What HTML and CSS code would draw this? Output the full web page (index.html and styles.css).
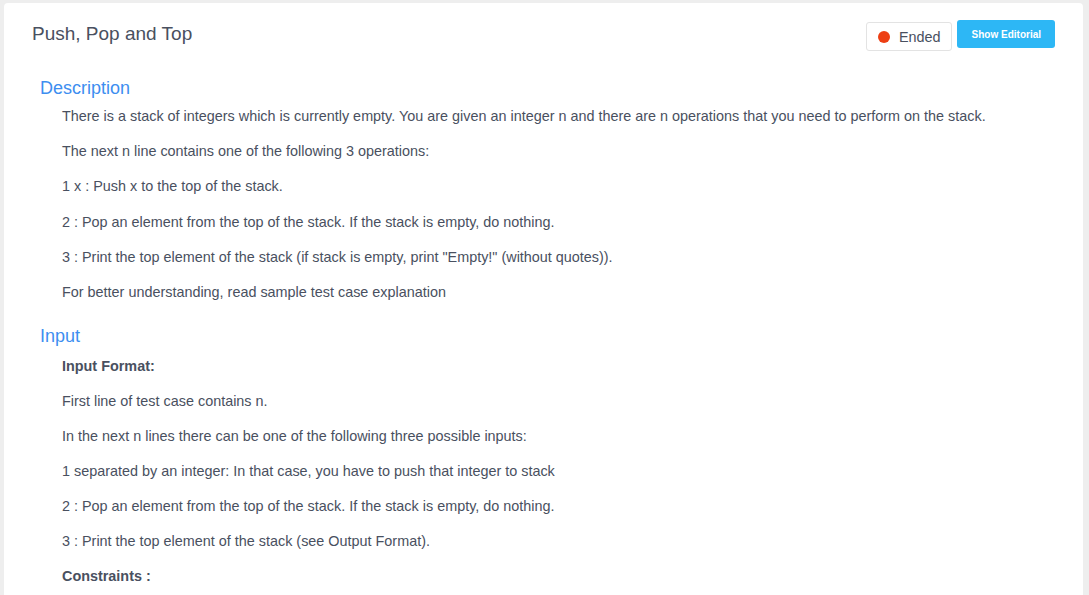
FILE: index.html
```html
<!DOCTYPE html>
<html>
<head>
<meta charset="utf-8">
<link rel="stylesheet" href="styles.css">
</head>
<body>
<div class="card">
  <div class="header">
    <h1 class="title">Push, Pop and Top</h1>
    <div class="actions">
      <div class="status"><span class="dot"></span>Ended</div>
      <button class="editorial">Show Editorial</button>
    </div>
  </div>
  <h2 class="section">Description</h2>
  <div class="body">
    <p>There is a stack of integers which is currently empty. You are given an integer n and there are n operations that you need to perform on the stack.</p>
    <p>The next n line contains one of the following 3 operations:</p>
    <p>1 x : Push x to the top of the stack.</p>
    <p>2 : Pop an element from the top of the stack. If the stack is empty, do nothing.</p>
    <p>3 : Print the top element of the stack (if stack is empty, print "Empty!" (without quotes)).</p>
    <p>For better understanding, read sample test case explanation</p>
  </div>
  <h2 class="section">Input</h2>
  <div class="body compact">
    <p class="strong">Input Format:</p>
    <p>First line of test case contains n.</p>
    <p>In the next n lines there can be one of the following three possible inputs:</p>
    <p>1 separated by an integer: In that case, you have to push that integer to stack</p>
    <p>2 : Pop an element from the top of the stack. If the stack is empty, do nothing.</p>
    <p>3 : Print the top element of the stack (see Output Format).</p>
    <p class="strong">Constraints :</p>
  </div>
</div>
</body>
</html>
```
FILE: styles.css
```css
html, body {
  margin: 0;
  padding: 0;
  background: #eeeeee;
  font-family: "Liberation Sans", Arial, sans-serif;
  overflow: hidden;
}
body {
  padding: 3px 6px 0 4px;
}
.card {
  background: #ffffff;
  border-radius: 4px;
  padding: 17px 28px 40px 28px;
  min-height: 700px;
}
.header {
  display: flex;
  justify-content: space-between;
  align-items: flex-start;
}
.title {
  margin: 1px 0 0 0;
  font-size: 19px;
  font-weight: normal;
  color: #495060;
  line-height: 26px;
}
.actions {
  display: flex;
  align-items: flex-start;
  gap: 5px;
}
.status {
  display: flex;
  align-items: center;
  box-sizing: border-box;
  height: 29px;
  margin-top: 2px;
  padding: 0 10px 0 11px;
  border: 1px solid #e3e3e3;
  border-radius: 3px;
  font-size: 14.4px;
  color: #495060;
}
.dot {
  width: 12px;
  height: 12px;
  border-radius: 50%;
  background: #ed3f14;
  margin-right: 9px;
}
.editorial {
  height: 28px;
  padding: 0 14px 0 15px;
  background: #2db7f5;
  border: 0;
  border-radius: 3px;
  color: #fff;
  font-family: "Liberation Sans", Arial, sans-serif;
  font-size: 10px;
  font-weight: bold;
}
.section {
  margin: 26px 0 0 8px;
  font-size: 18px;
  font-weight: normal;
  color: #3d8ef0;
  line-height: 22px;
}
.section + .body {
  margin-top: 7px;
}
.body {
  padding-left: 30px;
}
.body p {
  margin: 0 0 15.2px 0;
  font-size: 14.4px;
  line-height: 20px;
  color: #495060;
}
.body.compact p {
  margin-bottom: 15px;
}
.body p:last-child {
  margin-bottom: 0;
}
.body .strong {
  font-weight: bold;
}
.body + .section {
  margin-top: 23px;
}
.section + .body .strong:first-child {
  margin-top: 9px;
}
```
